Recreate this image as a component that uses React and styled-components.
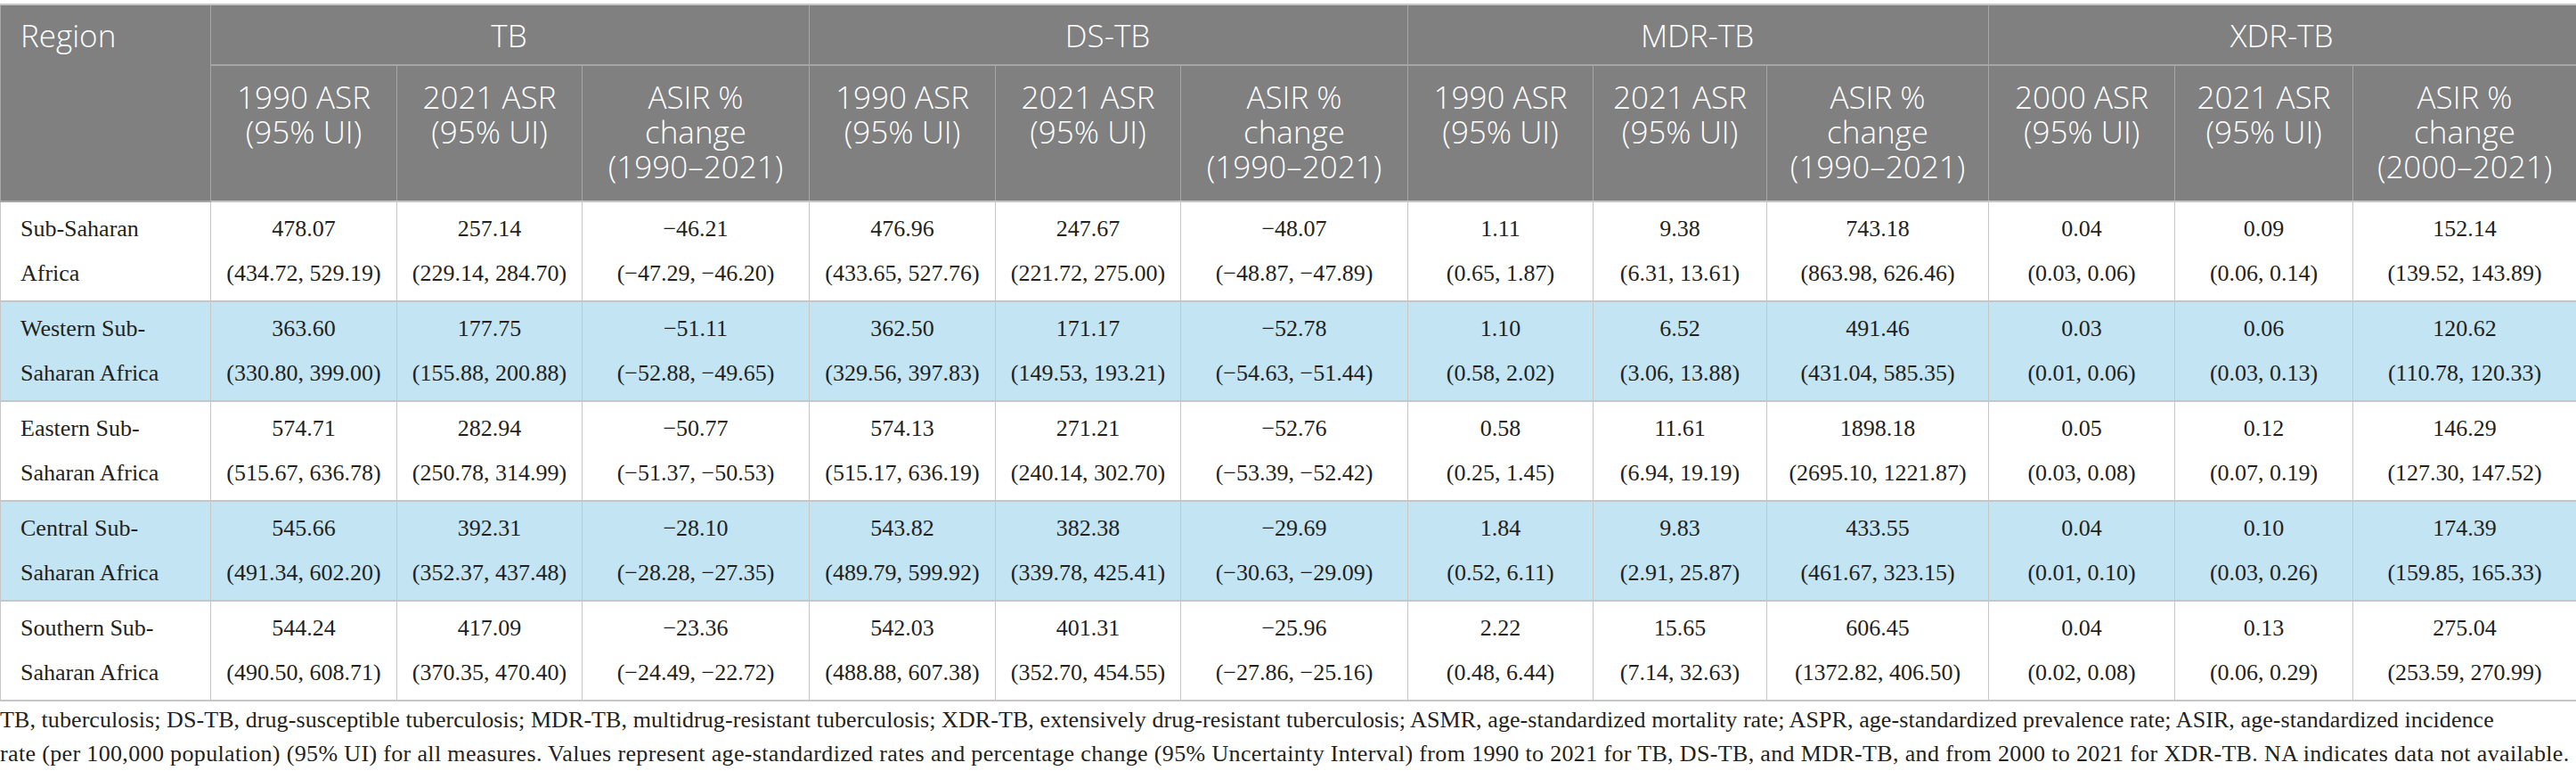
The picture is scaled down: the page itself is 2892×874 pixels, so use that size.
import React from "react";
import styled, { createGlobalStyle } from "styled-components";

const Global = createGlobalStyle`
  html, body { margin: 0; padding: 0; background: #ffffff; }
  body { width: 2892px; }
`;

const Page = styled.div`
  width: 2892px;
  padding-top: 4px;
`;

const Table = styled.table`
  width: 2892px;
  table-layout: fixed;
  border-collapse: collapse;
  border-top: 2px solid #c6c6c6;
  border-left: 1px solid #c6c6c6;
`;

const HeadCell = styled.th`
  background: #7f807f;
  color: #ffffff;
  font-family: "Open Sans", "Noto Sans", sans-serif;
  font-weight: 350;
  font-size: 35px;
  line-height: 39px;
  vertical-align: top;
  text-align: ${(p) => (p.$left ? "left" : "center")};
  padding: ${(p) => (p.$group ? "14px 8px 13px" : "15px 6px 19px")};
  padding-left: ${(p) => (p.$left ? "22px" : "6px")};
  border-left: 1px solid #a6a6a6;
  border-right: 1px solid #a6a6a6;
  border-bottom: 2px solid ${(p) => (p.$group ? "#a6a6a6" : "#c6c6c6")};
  white-space: nowrap;
`;

const Row = styled.tr`
  background: ${(p) => (p.$shaded ? "#c2e4f3" : "#ffffff")};
`;

const Cell = styled.td`
  font-family: "Liberation Serif", "Times New Roman", serif;
  font-size: 26px;
  line-height: 50px;
  color: #231f20;
  vertical-align: top;
  text-align: ${(p) => (p.$left ? "left" : "center")};
  padding: 5px 4px 5px ${(p) => (p.$left ? "22px" : "4px")};
  border-left: 1px solid #c6c6c6;
  border-right: 1px solid #c6c6c6;
  border-bottom: 2px solid #c6c6c6;
  white-space: nowrap;
`;

const Line = styled.div`
  display: block;
  letter-spacing: ${(p) => p.$spacing || "normal"};
`;

const Footnote = styled.div`
  font-family: "Liberation Serif", "Times New Roman", serif;
  font-size: 26px;
  line-height: 38px;
  color: #231f20;
  padding-top: 2px;
  white-space: nowrap;
`;

const widths = [236, 209, 208, 255, 209, 208, 255, 208, 195, 249, 209, 200, 251];

const groups = ["TB", "DS-TB", "MDR-TB", "XDR-TB"];

const subHeads = (group) => {
  const start = group === "XDR-TB" ? "2000" : "1990";
  return [
    [`${start} ASR`, "(95% UI)"],
    ["2021 ASR", "(95% UI)"],
    ["ASIR %", "change", `(${start}\u20132021)`],
  ];
};

const M = "\u2212";

const rows = [
  {
    region: ["Sub-Saharan", "Africa"],
    values: [
      ["478.07", "(434.72, 529.19)"],
      ["257.14", "(229.14, 284.70)"],
      [`${M}46.21`, `(${M}47.29, ${M}46.20)`],
      ["476.96", "(433.65, 527.76)"],
      ["247.67", "(221.72, 275.00)"],
      [`${M}48.07`, `(${M}48.87, ${M}47.89)`],
      ["1.11", "(0.65, 1.87)"],
      ["9.38", "(6.31, 13.61)"],
      ["743.18", "(863.98, 626.46)"],
      ["0.04", "(0.03, 0.06)"],
      ["0.09", "(0.06, 0.14)"],
      ["152.14", "(139.52, 143.89)"],
    ],
  },
  {
    region: ["Western Sub-", "Saharan Africa"],
    values: [
      ["363.60", "(330.80, 399.00)"],
      ["177.75", "(155.88, 200.88)"],
      [`${M}51.11`, `(${M}52.88, ${M}49.65)`],
      ["362.50", "(329.56, 397.83)"],
      ["171.17", "(149.53, 193.21)"],
      [`${M}52.78`, `(${M}54.63, ${M}51.44)`],
      ["1.10", "(0.58, 2.02)"],
      ["6.52", "(3.06, 13.88)"],
      ["491.46", "(431.04, 585.35)"],
      ["0.03", "(0.01, 0.06)"],
      ["0.06", "(0.03, 0.13)"],
      ["120.62", "(110.78, 120.33)"],
    ],
  },
  {
    region: ["Eastern Sub-", "Saharan Africa"],
    values: [
      ["574.71", "(515.67, 636.78)"],
      ["282.94", "(250.78, 314.99)"],
      [`${M}50.77`, `(${M}51.37, ${M}50.53)`],
      ["574.13", "(515.17, 636.19)"],
      ["271.21", "(240.14, 302.70)"],
      [`${M}52.76`, `(${M}53.39, ${M}52.42)`],
      ["0.58", "(0.25, 1.45)"],
      ["11.61", "(6.94, 19.19)"],
      ["1898.18", "(2695.10, 1221.87)"],
      ["0.05", "(0.03, 0.08)"],
      ["0.12", "(0.07, 0.19)"],
      ["146.29", "(127.30, 147.52)"],
    ],
  },
  {
    region: ["Central Sub-", "Saharan Africa"],
    values: [
      ["545.66", "(491.34, 602.20)"],
      ["392.31", "(352.37, 437.48)"],
      [`${M}28.10`, `(${M}28.28, ${M}27.35)`],
      ["543.82", "(489.79, 599.92)"],
      ["382.38", "(339.78, 425.41)"],
      [`${M}29.69`, `(${M}30.63, ${M}29.09)`],
      ["1.84", "(0.52, 6.11)"],
      ["9.83", "(2.91, 25.87)"],
      ["433.55", "(461.67, 323.15)"],
      ["0.04", "(0.01, 0.10)"],
      ["0.10", "(0.03, 0.26)"],
      ["174.39", "(159.85, 165.33)"],
    ],
  },
  {
    region: ["Southern Sub-", "Saharan Africa"],
    values: [
      ["544.24", "(490.50, 608.71)"],
      ["417.09", "(370.35, 470.40)"],
      [`${M}23.36`, `(${M}24.49, ${M}22.72)`],
      ["542.03", "(488.88, 607.38)"],
      ["401.31", "(352.70, 454.55)"],
      [`${M}25.96`, `(${M}27.86, ${M}25.16)`],
      ["2.22", "(0.48, 6.44)"],
      ["15.65", "(7.14, 32.63)"],
      ["606.45", "(1372.82, 406.50)"],
      ["0.04", "(0.02, 0.08)"],
      ["0.13", "(0.06, 0.29)"],
      ["275.04", "(253.59, 270.99)"],
    ],
  },
];

const Lines = ({ lines }) =>
  lines.map((l, i) => <Line key={i}>{l}</Line>);

export default function App() {
  return (
    <>
      <Global />
      <Page>
        <Table>
          <colgroup>
            {widths.map((w, i) => (
              <col key={i} style={{ width: `${w}px` }} />
            ))}
          </colgroup>
          <thead>
            <tr>
              <HeadCell rowSpan={2} $left $group>
                Region
              </HeadCell>
              {groups.map((g) => (
                <HeadCell key={g} colSpan={3} $group>
                  {g}
                </HeadCell>
              ))}
            </tr>
            <tr>
              {groups.map((g) =>
                subHeads(g).map((lines, i) => (
                  <HeadCell key={`${g}-${i}`}>
                    <Lines lines={lines} />
                  </HeadCell>
                ))
              )}
            </tr>
          </thead>
          <tbody>
            {rows.map((r, ri) => (
              <Row key={ri} $shaded={ri % 2 === 1}>
                <Cell $left>
                  <Lines lines={r.region} />
                </Cell>
                {r.values.map((v, vi) => (
                  <Cell key={vi}>
                    <Lines lines={v} />
                  </Cell>
                ))}
              </Row>
            ))}
          </tbody>
        </Table>
        <Footnote>
          <Line $spacing="0.08px">
            TB, tuberculosis; DS-TB, drug-susceptible tuberculosis; MDR-TB, multidrug-resistant tuberculosis; XDR-TB, extensively drug-resistant tuberculosis; ASMR, age-standardized mortality rate; ASPR, age-standardized prevalence rate; ASIR, age-standardized incidence
          </Line>
          <Line $spacing="0.35px">
            rate (per 100,000 population) (95% UI) for all measures. Values represent age-standardized rates and percentage change (95% Uncertainty Interval) from 1990 to 2021 for TB, DS-TB, and MDR-TB, and from 2000 to 2021 for XDR-TB. NA indicates data not available.
          </Line>
        </Footnote>
      </Page>
    </>
  );
}
